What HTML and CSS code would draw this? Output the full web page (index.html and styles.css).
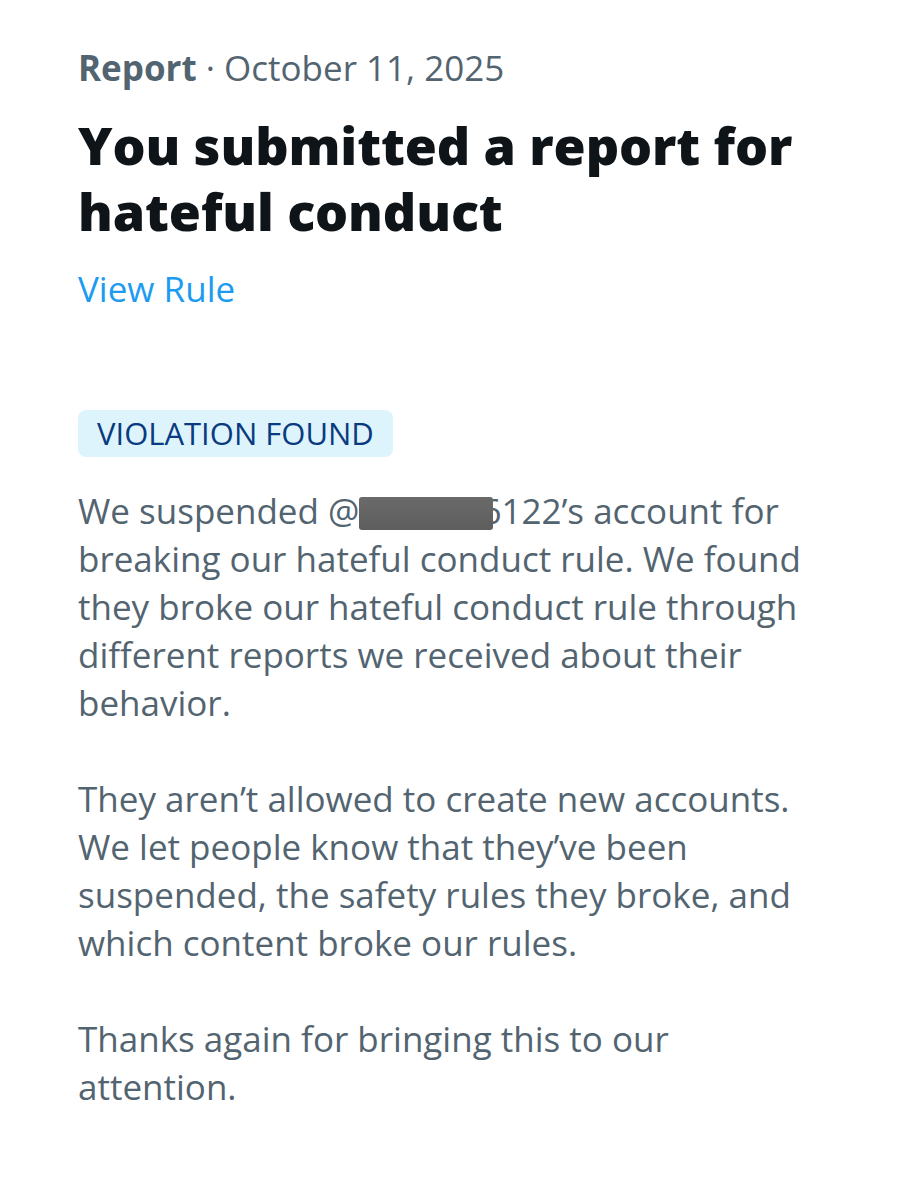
FILE: index.html
```html
<!DOCTYPE html>
<html lang="en">
<head>
<meta charset="utf-8">
<title>Report</title>
<link rel="stylesheet" href="styles.css">
</head>
<body>
<main class="page">
  <header class="meta"><span class="meta-kind">Report</span> · October 11, 2025</header>
  <h1 class="title">You submitted a report for<br>hateful conduct</h1>
  <a class="rule-link" href="#">View Rule</a>
  <div class="badge-row"><span class="badge">VIOLATION FOUND</span></div>
  <div class="body">
    <p>We suspended @<span class="redact"></span>6122’s account for<br>breaking our hateful conduct rule. We found<br>they broke our hateful conduct rule through<br>different reports we received about their<br>behavior.</p>
    <p>They aren’t allowed to create new accounts.<br>We let people know that they’ve been<br>suspended, the safety rules they broke, and<br>which content broke our rules.</p>
    <p>Thanks again for bringing this to our<br>attention.</p>
  </div>
</main>
</body>
</html>
```

FILE: styles.css
```css
html, body {
  margin: 0;
  padding: 0;
  background: #ffffff;
}
body {
  font-family: "Open Sans", "Noto Sans", sans-serif;
  -webkit-font-smoothing: antialiased;
}
.page {
  padding: 44px 0 0 78px;
  display: flex;
  flex-direction: column;
  align-items: flex-start;
}
.meta {
  font-size: 35px;
  line-height: 48px;
  color: #536471;
}
.meta-kind {
  font-weight: 700;
}
.title {
  margin: 20px 0 0 0;
  font-size: 52px;
  line-height: 66px;
  font-weight: 800;
  color: #0f1419;
  letter-spacing: -0.1px;
}
.rule-link {
  margin-top: 21px;
  font-size: 35px;
  line-height: 48px;
  color: #1d9bf0;
  text-decoration: none;
}
.badge-row {
  margin-top: 97px;
}
.badge {
  display: inline-block;
  background: #def4fd;
  color: #0a3a80;
  font-size: 31px;
  line-height: 47px;
  padding: 0 19px;
  border-radius: 8px;
}
.body {
  margin-top: 30px;
  color: #536471;
  font-size: 35px;
  line-height: 48px;
}
.body p {
  margin: 0 0 48px 0;
}
.redact {
  display: inline-block;
  position: relative;
  z-index: 1;
  width: 134px;
  height: 33px;
  margin-right: -12px;
  vertical-align: -6px;
  background: linear-gradient(#6a6a6a, #5e5e5e);
  border-radius: 3px;
}
```
